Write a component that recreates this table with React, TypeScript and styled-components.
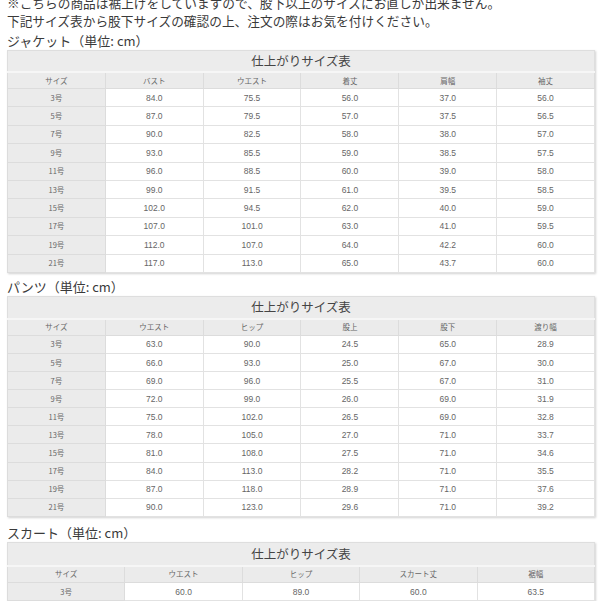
import React from "react";
import styled, { createGlobalStyle } from "styled-components";

const GlobalStyle = createGlobalStyle`
  html, body { margin: 0; padding: 0; background: #ffffff; }
  body { font-family: "Noto Sans CJK JP", "Noto Sans", sans-serif; color: #333; overflow: hidden; }
`;

const Page = styled.div`
  margin-top: -6px;
  padding: 0 8px 0 7px;
`;

const Note = styled.p`
  margin: 0;
  font-size: 12.7px;
  line-height: 18px;
  color: #3a3a3a;
  white-space: nowrap;
`;

const Heading = styled.h2<{ $gap: number }>`
  margin: ${(p) => p.$gap}px 0 0;
  font-size: 13px;
  line-height: 18px;
  font-weight: 400;
  color: #3a3a3a;
`;

const Table = styled.table`
  width: 100%;
  border-collapse: collapse;
  table-layout: fixed;
  box-shadow: 1px 1px 2px rgba(0, 0, 0, 0.18);
  font-family: "Noto Sans CJK JP", "Noto Sans", sans-serif;
`;

const TitleCell = styled.th<{ $h: number }>`
  height: ${(p) => p.$h}px;
  padding: 0;
  background: #ececec;
  border: 1px solid #dedede;
  font-size: 12.5px;
  line-height: 14px;
  font-weight: 400;
  color: #444;
  text-align: center;
`;

const HeadCell = styled.th`
  height: 15px;
  padding: 0;
  background: #ebebeb;
  border: 1px solid #dcdcdc;
  border-top: 2px solid #f6f6f6;
  font-size: 7.5px;
  line-height: 10px;
  font-weight: 400;
  color: #666;
  text-align: center;
`;

const Row = styled.tr<{ $h: number }>`
  height: ${(p) => p.$h}px;
`;

const SizeCell = styled.td`
  padding: 0;
  background: #ebebeb;
  border: 1px solid #dcdcdc;
  font-size: 7.5px;
  line-height: 10px;
  color: #666;
  text-align: center;
`;

const ValueCell = styled.td`
  padding: 0;
  background: #ffffff;
  border: 1px solid #e2e2e2;
  font-family: "Liberation Sans", "Noto Sans CJK JP", sans-serif;
  font-size: 8.5px;
  line-height: 10px;
  color: #666;
  text-align: center;
`;

type Chart = {
  label: string;
  gap: number;
  titleH: number;
  rowH: number;
  cols: string[];
  rows: string[][];
};

const charts: Chart[] = [
  {
    label: "ジャケット（単位: cm）",
    gap: 2,
    titleH: 20,
    rowH: 18.4,
    cols: ["サイズ", "バスト", "ウエスト", "着丈", "肩幅", "袖丈"],
    rows: [
      ["3号", "84.0", "75.5", "56.0", "37.0", "56.0"],
      ["5号", "87.0", "79.5", "57.0", "37.5", "56.5"],
      ["7号", "90.0", "82.5", "58.0", "38.0", "57.0"],
      ["9号", "93.0", "85.5", "59.0", "38.5", "57.5"],
      ["11号", "96.0", "88.5", "60.0", "39.0", "58.0"],
      ["13号", "99.0", "91.5", "61.0", "39.5", "58.5"],
      ["15号", "102.0", "94.5", "62.0", "40.0", "59.0"],
      ["17号", "107.0", "101.0", "63.0", "41.0", "59.5"],
      ["19号", "112.0", "107.0", "64.0", "42.2", "60.0"],
      ["21号", "117.0", "113.0", "65.0", "43.7", "60.0"],
    ],
  },
  {
    label: "パンツ（単位: cm）",
    gap: 5,
    titleH: 21,
    rowH: 18.1,
    cols: ["サイズ", "ウエスト", "ヒップ", "股上", "股下", "渡り幅"],
    rows: [
      ["3号", "63.0", "90.0", "24.5", "65.0", "28.9"],
      ["5号", "66.0", "93.0", "25.0", "67.0", "30.0"],
      ["7号", "69.0", "96.0", "25.5", "67.0", "31.0"],
      ["9号", "72.0", "99.0", "26.0", "69.0", "31.9"],
      ["11号", "75.0", "102.0", "26.5", "69.0", "32.8"],
      ["13号", "78.0", "105.0", "27.0", "71.0", "33.7"],
      ["15号", "81.0", "108.0", "27.5", "71.0", "34.6"],
      ["17号", "84.0", "113.0", "28.2", "71.0", "35.5"],
      ["19号", "87.0", "118.0", "28.9", "71.0", "37.6"],
      ["21号", "90.0", "123.0", "29.6", "71.0", "39.2"],
    ],
  },
  {
    label: "スカート（単位: cm）",
    gap: 7,
    titleH: 22,
    rowH: 18.4,
    cols: ["サイズ", "ウエスト", "ヒップ", "スカート丈", "裾幅"],
    rows: [["3号", "60.0", "89.0", "60.0", "63.5"]],
  },
];

function SizeChart({ chart }: { chart: Chart }) {
  return (
    <>
      <Heading $gap={chart.gap}>{chart.label}</Heading>
      <Table>
        <thead>
          <tr>
            <TitleCell $h={chart.titleH} colSpan={chart.cols.length}>
              仕上がりサイズ表
            </TitleCell>
          </tr>
          <tr>
            {chart.cols.map((c) => (
              <HeadCell key={c}>{c}</HeadCell>
            ))}
          </tr>
        </thead>
        <tbody>
          {chart.rows.map((r) => (
            <Row key={r[0]} $h={chart.rowH}>
              <SizeCell>{r[0]}</SizeCell>
              {r.slice(1).map((v, i) => (
                <ValueCell key={i}>{v}</ValueCell>
              ))}
            </Row>
          ))}
        </tbody>
      </Table>
    </>
  );
}

export default function App() {
  return (
    <>
      <GlobalStyle />
      <Page>
        <Note>※こちらの商品は裾上げをしていますので、股下以上のサイズにお直しが出来ません。</Note>
        <Note>下記サイズ表から股下サイズの確認の上、注文の際はお気を付けください。</Note>
        {charts.map((c) => (
          <SizeChart key={c.label} chart={c} />
        ))}
      </Page>
    </>
  );
}
